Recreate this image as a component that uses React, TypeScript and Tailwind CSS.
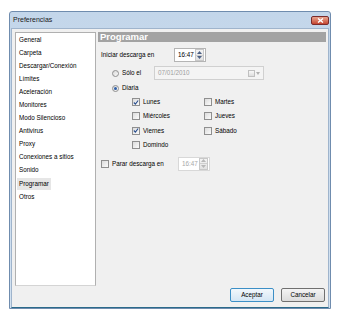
import React from "react";

const font = { fontFamily: '"Liberation Sans", Arial, sans-serif' };

function Check({ checked = false }: { checked?: boolean }) {
  return (
    <div className="w-[8px] h-[8px] border border-[#8f8f8f] bg-gradient-to-br from-[#dcdcdc] to-[#fbfbfb] flex items-center justify-center shrink-0">
      {checked && (
        <svg width="7" height="7" viewBox="0 0 7 7">
          <path d="M1 3.5 L2.8 5.3 L6 1.2" stroke="#2a4f8f" strokeWidth="1.3" fill="none" />
        </svg>
      )}
    </div>
  );
}

function Radio({ checked = false }: { checked?: boolean }) {
  return (
    <div className="w-[7px] h-[7px] rounded-full border border-[#8f8f8f] bg-gradient-to-br from-[#d8d8d8] to-[#fafafa] flex items-center justify-center shrink-0">
      {checked && <div className="w-[3px] h-[3px] rounded-full bg-[#2f5fa8]" />}
    </div>
  );
}

function Spinner({ disabled = false }: { disabled?: boolean }) {
  const c = disabled ? "#b8b8b8" : "#4d6185";
  return (
    <div className="flex flex-col w-[9px] h-[12px] border border-[#c8c8c8] bg-gradient-to-b from-[#f4f4f4] to-[#e2e2e2]">
      <div className="flex-1 flex items-center justify-center border-b border-[#cfcfcf]">
        <svg width="5" height="3" viewBox="0 0 5 3">
          <path d="M0 3 L2.5 0 L5 3 Z" fill={c} />
        </svg>
      </div>
      <div className="flex-1 flex items-center justify-center">
        <svg width="5" height="3" viewBox="0 0 5 3">
          <path d="M0 0 L2.5 3 L5 0 Z" fill={c} />
        </svg>
      </div>
    </div>
  );
}

function TimeBox({ disabled = false }: { disabled?: boolean }) {
  return (
    <div
      className={`flex items-center justify-between w-[32px] h-[14px] border bg-white pl-[3px] pr-[1px] ${
        disabled ? "border-[#d8d8d8] text-[#a8a8a8]" : "border-[#b4b4b4] text-black"
      }`}
    >
      <span>16:47</span>
      <Spinner disabled={disabled} />
    </div>
  );
}

export default function App() {
  const items = [
    "General",
    "Carpeta",
    "Descargar/Conexión",
    "Límites",
    "Aceleración",
    "Monitores",
    "Modo Silencioso",
    "Antivirus",
    "Proxy",
    "Conexiones a sitios",
    "Sonido",
    "Programar",
    "Otros",
  ];
  return (
    <div className="w-[340px] h-[318px] bg-white pt-[11px] pl-[9px] text-[6.3px] leading-[8px]" style={font}>
      <div className="w-[322px] h-[298px] border border-[#6f8cae] rounded-t-[3px] bg-gradient-to-b from-[#c3d6ea] to-[#d3e2f1] flex flex-col">
        {/* title bar */}
        <div className="h-[16px] flex items-center justify-between pl-[3px] pr-[1px] shrink-0">
          <span className="text-[7px] text-[#1a1a1a]">Preferencias</span>
          <div className="w-[18px] h-[9px] rounded-[2px] border border-[#7a2b2b] bg-gradient-to-b from-[#e8a590] to-[#c4432e] flex items-center justify-center">
            <svg width="7" height="5" viewBox="0 0 7 5">
              <path d="M1 0.5 L6 4.5 M6 0.5 L1 4.5" stroke="white" strokeWidth="1.4" />
            </svg>
          </div>
        </div>
        {/* content */}
        <div className="mx-[1px] mb-[1px] flex-1 bg-[#f0f0f0] border border-[#9fb4cc] border-b-[#2b6a8a] flex flex-col pt-[3px] pl-[3px] pr-[2px] pb-[5px]">
          <div className="flex gap-[2px] h-[254px]">
            {/* list */}
            <div className="w-[81px] h-full bg-white border border-[#b0b0b0] border-b-[#d4d4d4] flex flex-col">
              {items.map((it) => (
                <div key={it} className="h-[13.1px] flex items-center pl-[1px]">
                  <span
                    className={`px-[2px] h-[12px] flex items-center ${
                      it === "Programar" ? "bg-[#e6e6e6]" : ""
                    }`}
                  >
                    {it}
                  </span>
                </div>
              ))}
            </div>
            {/* panel */}
            <div className="flex-1 flex flex-col">
              <div className="h-[10px] bg-[#a3a3a3] text-white font-bold text-[9.5px] leading-[10px] pl-[2px]">
                Programar
              </div>
              <div className="flex items-center mt-[6px] h-[14px] pl-[3px]">
                <span className="w-[73px]">Iniciar descarga en</span>
                <TimeBox />
              </div>
              <div className="flex items-center mt-[4px] h-[14px] pl-[14px]">
                <Radio />
                <span className="ml-[3px] w-[32px]">Sólo el</span>
                <div className="w-[110px] h-[14px] border border-[#d0d0d0] bg-[#f4f4f4] flex items-center justify-between pl-[3px] pr-[3px] text-[#a0a0a0]">
                  <span>07/01/2010</span>
                  <div className="flex items-center gap-[1px]">
                    <div className="w-[7px] h-[7px] border border-[#c0c0c0] bg-gradient-to-b from-[#f8f8f8] to-[#dedede]" />
                    <svg width="4" height="3" viewBox="0 0 4 3">
                      <path d="M0 0 L2 3 L4 0 Z" fill="#b0b0b0" />
                    </svg>
                  </div>
                </div>
              </div>
              <div className="flex items-center mt-[1px] h-[14px] pl-[14px]">
                <Radio checked />
                <span className="ml-[3px]">Diaria</span>
              </div>
              <div className="grid grid-cols-[72px_72px] pl-[34px] mt-[0px]">
                {[
                  ["Lunes", true],
                  ["Martes", false],
                  ["Miércoles", false],
                  ["Jueves", false],
                  ["Viernes", true],
                  ["Sábado", false],
                  ["Domindo", false],
                ].map(([l, c]) => (
                  <div key={l as string} className="flex items-center h-[14.3px]">
                    <Check checked={c as boolean} />
                    <span className="ml-[3px]">{l as string}</span>
                  </div>
                ))}
              </div>
              <div className="flex items-center mt-[4px] h-[15px] pl-[3px]">
                <Check />
                <span className="ml-[3px] w-[66px]">Parar descarga en</span>
                <TimeBox disabled />
              </div>
            </div>
          </div>
          <div className="flex justify-end gap-[7px] mt-[2px] pr-[1px]">
            <button className="w-[44px] h-[14px] rounded-[2px] border border-[#3c8fc6] bg-gradient-to-b from-[#f2f8fc] to-[#d4e6f4] flex items-center justify-center text-[6.3px]">
              Aceptar
            </button>
            <button className="w-[44px] h-[14px] rounded-[2px] border border-[#707070] bg-gradient-to-b from-[#f4f4f4] to-[#dcdcdc] flex items-center justify-center text-[6.3px]">
              Cancelar
            </button>
          </div>
        </div>
      </div>
    </div>
  );
}
